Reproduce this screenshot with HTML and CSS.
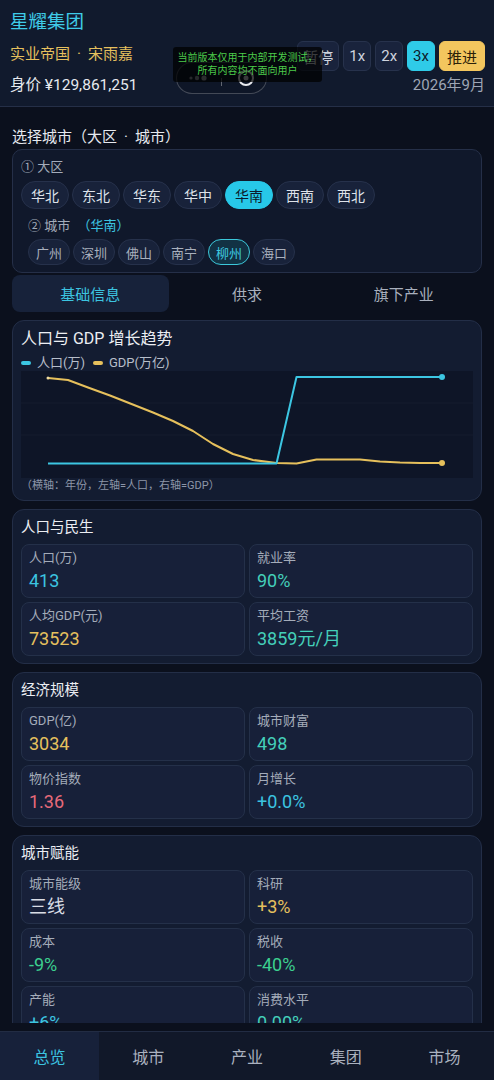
FILE: index.html
```html
<!DOCTYPE html>
<html lang="zh-CN">
<head>
    <meta charset="UTF-8">
    <meta name="viewport" content="width=device-width, initial-scale=1.0">
    <title>星耀集团</title>
    <link rel="stylesheet" href="styles.css">
</head>
<body>

<div class="app">
    <!-- 顶部：集团信息 + 时间控制 -->
    <header class="topbar">
        <div class="brand">
            <div class="brand-name">星耀集团</div>
            <div class="brand-sub">实业帝国<span class="dot">·</span>宋雨嘉</div>
            <div class="brand-worth">身价 ¥129,861,251</div>
        </div>
        <div class="clock">
            <div class="speed">
                <button class="speed-btn">暂停</button>
                <button class="speed-btn">1x</button>
                <button class="speed-btn">2x</button>
                <button class="speed-btn active">3x</button>
                <button class="speed-btn advance">推进</button>
            </div>
            <div class="date">2026年9月</div>
        </div>

        <!-- 悬浮胶囊 + 测试提示 -->
        <div class="capsule">
            <svg class="capsule-dots" width="20" height="8" viewBox="0 0 20 8">
                <circle cx="3" cy="4" r="1.6" fill="#8a8f99"/>
                <circle cx="9" cy="4" r="2.2" fill="#8a8f99"/>
                <circle cx="16" cy="4" r="2.6" fill="#9aa0aa"/>
            </svg>
            <span class="capsule-line"></span>
            <svg class="capsule-ring" width="20" height="20" viewBox="0 0 20 20">
                <circle cx="10" cy="10" r="7" fill="none" stroke="#e8eaee" stroke-width="2"/>
                <circle cx="10" cy="10" r="2.5" fill="#c8ccd2"/>
            </svg>
        </div>
        <div class="dev-toast">当前版本仅用于内部开发测试，<br>所有内容均不面向用户</div>
    </header>

    <main class="content">
        <div class="section-label">选择城市（大区<span class="dot">·</span>城市）</div>
        <div class="picker">
            <div class="step">① 大区</div>
            <div class="pills">
                <span class="pill">华北</span>
                <span class="pill">东北</span>
                <span class="pill">华东</span>
                <span class="pill">华中</span>
                <span class="pill on">华南</span>
                <span class="pill">西南</span>
                <span class="pill">西北</span>
            </div>
            <div class="city-block">
                <div class="step">② 城市 <span class="step-hint">（华南）</span></div>
                <div class="pills small">
                    <span class="pill">广州</span>
                    <span class="pill">深圳</span>
                    <span class="pill">佛山</span>
                    <span class="pill">南宁</span>
                    <span class="pill on">柳州</span>
                    <span class="pill">海口</span>
                </div>
            </div>
        </div>

        <div class="tabs">
            <div class="tab active">基础信息</div>
            <div class="tab">供求</div>
            <div class="tab">旗下产业</div>
        </div>

        <!-- 趋势图 -->
        <section class="card">
            <div class="card-title big">人口与 GDP 增长趋势</div>
            <div class="legend">
                <span class="legend-item"><i class="swatch cyan"></i>人口(万)</span>
                <span class="legend-item"><i class="swatch gold"></i>GDP(万亿)</span>
            </div>
            <div class="chart">
                <svg width="452" height="107" viewBox="0 0 452 107">
                    <line x1="0" y1="32" x2="452" y2="32" stroke="rgba(255,255,255,0.035)"/>
                    <line x1="0" y1="64" x2="452" y2="64" stroke="rgba(255,255,255,0.035)"/>
                    <polyline fill="none" stroke="#e6c05c" stroke-width="2" stroke-linejoin="round" stroke-linecap="round"
                        points="27,7 47,9 67,16.5 89,24.5 110.5,33 132,41.5 152,50 172,60 192,73 212,83 232,89 255.5,92 275.5,92.5 295.5,88.5 315.5,88.5 339,88.5 359,90.5 379,91.5 399,92 421,92"/>
                    <polyline fill="none" stroke="#3cc6e2" stroke-width="2" stroke-linejoin="round"
                        points="27,92.5 255.5,92.5 275.5,6 421,6"/>
                    <circle cx="27" cy="7" r="1.5" fill="#f0dca0"/>
                    <circle cx="421" cy="6" r="3" fill="#3cc6e2"/>
                    <circle cx="421" cy="92" r="3" fill="#e6c05c"/>
                </svg>
            </div>
            <div class="chart-note">（横轴：年份，左轴=人口，右轴=GDP）</div>
        </section>

        <section class="card">
            <div class="card-title">人口与民生</div>
            <div class="stats">
                <div class="stat"><div class="stat-label">人口(万)</div><div class="stat-value cyan">413</div></div>
                <div class="stat"><div class="stat-label">就业率</div><div class="stat-value teal">90%</div></div>
                <div class="stat"><div class="stat-label">人均GDP(元)</div><div class="stat-value gold">73523</div></div>
                <div class="stat"><div class="stat-label">平均工资</div><div class="stat-value teal">3859元/月</div></div>
            </div>
        </section>

        <section class="card">
            <div class="card-title">经济规模</div>
            <div class="stats">
                <div class="stat"><div class="stat-label">GDP(亿)</div><div class="stat-value gold">3034</div></div>
                <div class="stat"><div class="stat-label">城市财富</div><div class="stat-value teal">498</div></div>
                <div class="stat"><div class="stat-label">物价指数</div><div class="stat-value red">1.36</div></div>
                <div class="stat"><div class="stat-label">月增长</div><div class="stat-value cyan">+0.0%</div></div>
            </div>
        </section>

        <section class="card">
            <div class="card-title">城市赋能</div>
            <div class="stats">
                <div class="stat"><div class="stat-label">城市能级</div><div class="stat-value plain">三线</div></div>
                <div class="stat"><div class="stat-label">科研</div><div class="stat-value gold">+3%</div></div>
                <div class="stat"><div class="stat-label">成本</div><div class="stat-value green">-9%</div></div>
                <div class="stat"><div class="stat-label">税收</div><div class="stat-value green">-40%</div></div>
                <div class="stat"><div class="stat-label">产能</div><div class="stat-value cyan">+6%</div></div>
                <div class="stat"><div class="stat-label">消费水平</div><div class="stat-value teal">0.00%</div></div>
            </div>
        </section>
    </main>

    <nav class="tabbar">
        <div class="nav-item active">总览</div>
        <div class="nav-item">城市</div>
        <div class="nav-item">产业</div>
        <div class="nav-item">集团</div>
        <div class="nav-item">市场</div>
    </nav>
</div>

</body>
</html>
```

FILE: styles.css
```css
* {
    box-sizing: border-box;
}

body {
    margin: 0;
    background-color: #0b101d;
    color: #e4e7ee;
    font-family: Roboto, "Noto Sans CJK SC", sans-serif;
}

.app {
    width: 494px;
    height: 1080px;
    display: flex;
    flex-direction: column;
    overflow: hidden;
}

.dot {
    margin: 0 7px;
}

/* ---------- 顶部 ---------- */
.topbar {
    position: relative;
    height: 107px;
    flex-shrink: 0;
    display: flex;
    justify-content: space-between;
    padding: 9px 9px 0 10px;
    background-color: #111a2d;
    border-bottom: 1px solid #252f47;
}

.brand-name {
    font-size: 18.5px;
    line-height: 26px;
    color: #3fcbe8;
}

.brand-sub {
    margin-top: 9px;
    font-size: 15px;
    line-height: 20px;
    color: #e6c05e;
}

.brand-worth {
    margin-top: 10px;
    font-size: 15.5px;
    line-height: 22px;
    color: #e6e9ef;
}

.clock {
    display: flex;
    flex-direction: column;
    align-items: flex-end;
    padding-top: 32px;
}

.speed {
    display: flex;
    gap: 4px;
}

.speed-btn {
    height: 30px;
    padding: 0 5px;
    font-family: inherit;
    font-size: 15px;
    color: #cfd4de;
    background-color: #19233c;
    border: 1px solid #27324c;
    border-radius: 6px;
}

.speed-btn.active {
    background-color: #2fcbe8;
    border-color: #2fcbe8;
    color: #0d1a2b;
}

.speed-btn.advance {
    padding: 0 7px;
    background-color: #f3c65e;
    border-color: #f3c65e;
    color: #2b2108;
}

.date {
    margin-top: 4px;
    font-size: 15px;
    line-height: 20px;
    color: #9ea6b5;
}

.capsule {
    position: absolute;
    left: 176px;
    top: 62px;
    width: 91px;
    height: 32px;
    display: flex;
    align-items: center;
    padding: 0 10px 0 11px;
    border: 1px solid rgba(255, 255, 255, 0.22);
    border-radius: 16px;
    background-color: rgba(0, 0, 0, 0.12);
}

.capsule-line {
    width: 1px;
    height: 8px;
    margin: 8px 0 0 13px;
    background-color: rgba(255, 255, 255, 0.35);
}

.capsule-ring {
    margin-left: auto;
}

.dev-toast {
    position: absolute;
    left: 173px;
    top: 47px;
    width: 149px;
    height: 35px;
    padding-top: 4px;
    background-color: rgba(0, 0, 0, 0.72);
    border-radius: 3px;
    color: #4ccb4a;
    font-size: 10px;
    line-height: 13px;
    text-align: center;
    white-space: nowrap;
}

/* ---------- 内容区 ---------- */
.content {
    flex: 1;
    overflow: hidden;
    padding: 0 12px;
    margin-bottom: 8px;
}

.section-label {
    margin-top: 21px;
    font-size: 15px;
    line-height: 18px;
    color: #e6e9ef;
}

.picker {
    margin-top: 3px;
    padding: 9px 8px 7px;
    background-color: #10182b;
    border: 1px solid #252f48;
    border-radius: 10px;
}

.step {
    font-size: 13px;
    line-height: 16px;
    color: #a4acba;
}

.step-hint {
    margin-left: 4px;
    color: #3cc4e0;
}

.pills {
    display: flex;
    gap: 3px;
    margin-top: 6px;
}

.pill {
    height: 28px;
    padding: 0 9px;
    display: flex;
    align-items: center;
    font-size: 14px;
    color: #dfe3ea;
    background-color: #18223a;
    border: 1px solid #26314b;
    border-radius: 14px;
}

.pill.on {
    background-color: #27c8e8;
    border-color: #27c8e8;
    color: #0c1a2a;
}

.city-block {
    padding-left: 7px;
    margin-top: 9px;
}

.pills.small {
    margin-top: 5px;
}

.pills.small .pill {
    height: 26px;
    padding: 0 7px;
    font-size: 13px;
    color: #a9b0bd;
    border-radius: 13px;
}

.pills.small .pill.on {
    background-color: #123244;
    border-color: #3cc8da;
    color: #3fcbe2;
}

.tabs {
    margin-top: 2px;
    display: grid;
    grid-template-columns: 1fr 1fr 1fr;
    height: 37px;
}

.tab {
    display: flex;
    align-items: center;
    justify-content: center;
    font-size: 15px;
    color: #a9b0bd;
    border-radius: 8px;
}

.tab.active {
    background-color: #17223a;
    color: #3cc4e0;
}

/* ---------- 卡片 ---------- */
.card {
    margin-top: 8px;
    padding: 8px 8px 7px;
    background-color: #131c31;
    border: 1px solid #232e47;
    border-radius: 12px;
}

.card-title {
    font-size: 14.5px;
    line-height: 20px;
    color: #eceef3;
}

.card-title.big {
    font-size: 16px;
}

.legend {
    display: flex;
    gap: 8px;
    margin-top: 7px;
    font-size: 13px;
    line-height: 14px;
    color: #b7beca;
}

.legend-item {
    display: flex;
    align-items: center;
}

.swatch {
    width: 10px;
    height: 4px;
    margin-right: 6px;
    border-radius: 2px;
}

.swatch.cyan {
    background-color: #3cc6e2;
}

.swatch.gold {
    background-color: #e6c05c;
}

.chart {
    margin-top: 1px;
    height: 107px;
    background-color: #0e1527;
}

.chart svg {
    display: block;
}

.chart-note {
    margin-top: 1px;
    font-size: 11px;
    line-height: 14px;
    color: #8d96a8;
}

.stats {
    margin-top: 6px;
    display: grid;
    grid-template-columns: 1fr 1fr;
    gap: 4px;
}

.stat {
    height: 54px;
    padding: 4px 7px 0;
    background-color: #172039;
    border: 1px solid #243049;
    border-radius: 8px;
}

.stat-label {
    font-size: 13px;
    line-height: 18px;
    color: #a4acba;
}

.stat-value {
    margin-top: 2px;
    font-size: 18px;
    line-height: 24px;
}

.cyan { color: #3cc4e0; }
.teal { color: #44cfb9; }
.gold { color: #e6c05e; }
.green { color: #3ccf8f; }
.red { color: #e66a79; }
.plain { color: #d9dde5; }

/* ---------- 底部导航 ---------- */
.tabbar {
    height: 49px;
    flex-shrink: 0;
    display: grid;
    grid-template-columns: repeat(5, 1fr);
    background-color: #111829;
    border-top: 1px solid #222c43;
}

.nav-item {
    display: flex;
    align-items: center;
    justify-content: center;
    font-size: 16px;
    color: #aab1bf;
}

.nav-item.active {
    background-color: #17213a;
    color: #3cc4e0;
}
```
